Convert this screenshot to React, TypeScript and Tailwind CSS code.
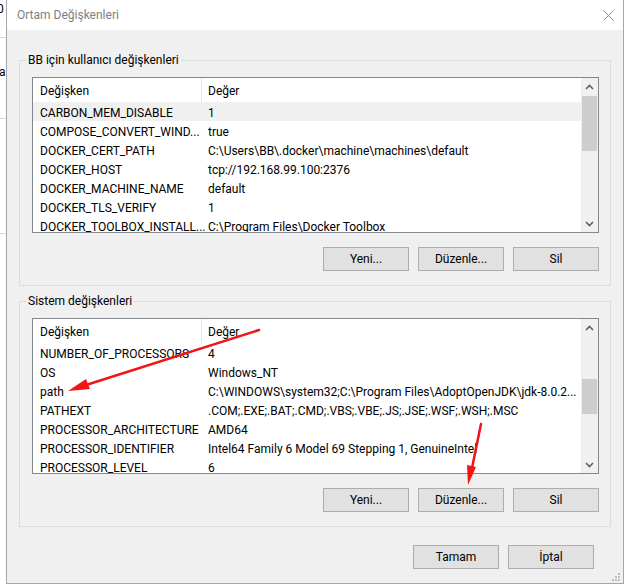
import React from 'react'

type Row = { name: string; value: string; selected?: boolean }

const KULLANICI: Row[] = [
  { name: 'CARBON_MEM_DISABLE', value: '1', selected: true },
  { name: 'COMPOSE_CONVERT_WIND...', value: 'true' },
  { name: 'DOCKER_CERT_PATH', value: 'C:\\Users\\BB\\.docker\\machine\\machines\\default' },
  { name: 'DOCKER_HOST', value: 'tcp://192.168.99.100:2376' },
  { name: 'DOCKER_MACHINE_NAME', value: 'default' },
  { name: 'DOCKER_TLS_VERIFY', value: '1' },
  { name: 'DOCKER_TOOLBOX_INSTALL...', value: 'C:\\Program Files\\Docker Toolbox' },
]

const SISTEM: Row[] = [
  { name: 'NUMBER_OF_PROCESSORS', value: '4' },
  { name: 'OS', value: 'Windows_NT' },
  { name: 'path', value: 'C:\\WINDOWS\\system32;C:\\Program Files\\AdoptOpenJDK\\jdk-8.0.2...' },
  { name: 'PATHEXT', value: '.COM;.EXE;.BAT;.CMD;.VBS;.VBE;.JS;.JSE;.WSF;.WSH;.MSC' },
  { name: 'PROCESSOR_ARCHITECTURE', value: 'AMD64' },
  { name: 'PROCESSOR_IDENTIFIER', value: 'Intel64 Family 6 Model 69 Stepping 1, GenuineIntel' },
  { name: 'PROCESSOR_LEVEL', value: '6' },
]

function Chevron({ up }: { up?: boolean }) {
  return (
    <svg width="9" height="6" viewBox="0 0 9 6">
      <path
        d={up ? 'M1 5 L4.5 1.5 L8 5' : 'M1 1 L4.5 4.5 L8 1'}
        fill="none"
        stroke="#606060"
        strokeWidth="1.6"
      />
    </svg>
  )
}

function Scrollbar({ thumbTop, thumbHeight }: { thumbTop: number; thumbHeight: number }) {
  return (
    <div className="flex w-[17px] shrink-0 flex-col bg-[#f0f0f0]">
      <div className="flex h-[17px] items-center justify-center">
        <Chevron up />
      </div>
      <div className="flex-1 px-[1px]">
        <div className="bg-[#cdcdcd]" style={{ marginTop: thumbTop, height: thumbHeight }} />
      </div>
      <div className="flex h-[17px] items-center justify-center">
        <Chevron />
      </div>
    </div>
  )
}

function Liste({ rows, thumbTop, thumbHeight }: { rows: Row[]; thumbTop: number; thumbHeight: number }) {
  return (
    <div className="flex h-[156px] border border-[#828790] bg-white">
      <div className="min-w-0 flex-1 overflow-hidden">
        <div className="flex h-[24px] items-start">
          <div className="h-full w-[169px] border-r border-[#e5e5e5] pl-[7px] pt-[5px]">Değişken</div>
          <div className="pl-[6px] pt-[5px]">Değer</div>
        </div>
        {rows.map(r => (
          <div
            key={r.name}
            className={`flex h-[19px] items-start whitespace-nowrap pt-[3px] ${r.selected ? 'bg-[#f0f0f0]' : ''}`}
          >
            <div className="w-[169px] shrink-0 pl-[7px]">{r.name}</div>
            <div className="pl-[6px]">{r.value}</div>
          </div>
        ))}
      </div>
      <Scrollbar thumbTop={thumbTop} thumbHeight={thumbHeight} />
    </div>
  )
}

function Buton({ children }: { children: React.ReactNode }) {
  return (
    <button
      type="button"
      className="flex h-[24px] w-[86px] items-center justify-center border border-[#adadad] bg-[#e1e1e1] text-black"
    >
      {children}
    </button>
  )
}

function Grup({ baslik, rows, thumbTop, thumbHeight }: { baslik: string; rows: Row[]; thumbTop: number; thumbHeight: number }) {
  return (
    <div className="relative h-[226px] border border-[#dcdcdc] pl-[12px] pr-[11px] pt-[16px]">
      <span className="absolute -top-[9px] left-[6px] bg-[#f0f0f0] px-[2px]">{baslik}</span>
      <Liste rows={rows} thumbTop={thumbTop} thumbHeight={thumbHeight} />
      <div className="mt-[14px] flex justify-end gap-[9px]">
        <Buton>Yeni...</Buton>
        <Buton>Düzenle...</Buton>
        <Buton>Sil</Buton>
      </div>
    </div>
  )
}

export default function App() {
  return (
    <div className="relative flex h-[588px] w-[624px] overflow-hidden bg-white font-['Roboto','Liberation_Sans',sans-serif] text-[12px] leading-[16px] text-black">
      {/* arka pencere kenari */}
      <div className="flex w-[6px] shrink-0 flex-col overflow-hidden whitespace-nowrap">
        <div className="h-[38px] border-b border-[#d9d9d9] pt-[1px]">
          <span className="-ml-[3px] block">0</span>
        </div>
        <div className="h-[81px] border-b border-[#d9d9d9] pt-[26px]">
          <span className="-ml-[1px] block">a</span>
        </div>
        <div className="h-[115px] border-b border-[#d9d9d9]" />
      </div>

      {/* dialog */}
      <div className="flex h-[584px] w-[618px] shrink-0 flex-col border-x border-b border-[#a6a6a6]">
        <div className="flex h-[30px] shrink-0 items-center justify-between bg-white pl-[10px] pr-[9px]">
          <span className="text-[#808080]">Ortam Değişkenleri</span>
          <svg width="11" height="11" viewBox="0 0 11 11">
            <path d="M0.5 0.5 L10.5 10.5 M10.5 0.5 L0.5 10.5" stroke="#8a8a8a" strokeWidth="1" />
          </svg>
        </div>
        <div className="flex-1 bg-[#f0f0f0] px-[12px] pt-[30px]">
          <Grup baslik="BB için kullanıcı değişkenleri" rows={KULLANICI} thumbTop={1} thumbHeight={55} />
          <div className="mt-[15px]">
            <Grup baslik="Sistem değişkenleri" rows={SISTEM} thumbTop={43} thumbHeight={35} />
          </div>
          <div className="mt-[18px] flex justify-end gap-[9px] pr-[17px]">
            <Buton>Tamam</Buton>
            <Buton>İptal</Buton>
          </div>
        </div>
      </div>

      {/* kirmizi oklar ve boyut tutamaci */}
      <svg className="pointer-events-none absolute inset-0" width="624" height="588" viewBox="0 0 624 588">
        <line x1="259" y1="330" x2="86" y2="385" stroke="#f01414" strokeWidth="2.5" strokeLinecap="round" />
        <polygon points="68,391 90,389 86,379" fill="#f01414" />
        <line x1="481" y1="424" x2="472" y2="468" stroke="#f01414" strokeWidth="2.5" strokeLinecap="round" />
        <polygon points="468,485 476,467 467,465" fill="#f01414" />
        <g fill="#bcbcbc">
          <rect x="618" y="573" width="2" height="2" />
          <rect x="618" y="576" width="2" height="2" />
          <rect x="615" y="576" width="2" height="2" />
          <rect x="618" y="579" width="2" height="2" />
          <rect x="615" y="579" width="2" height="2" />
          <rect x="612" y="579" width="2" height="2" />
        </g>
      </svg>
    </div>
  )
}
